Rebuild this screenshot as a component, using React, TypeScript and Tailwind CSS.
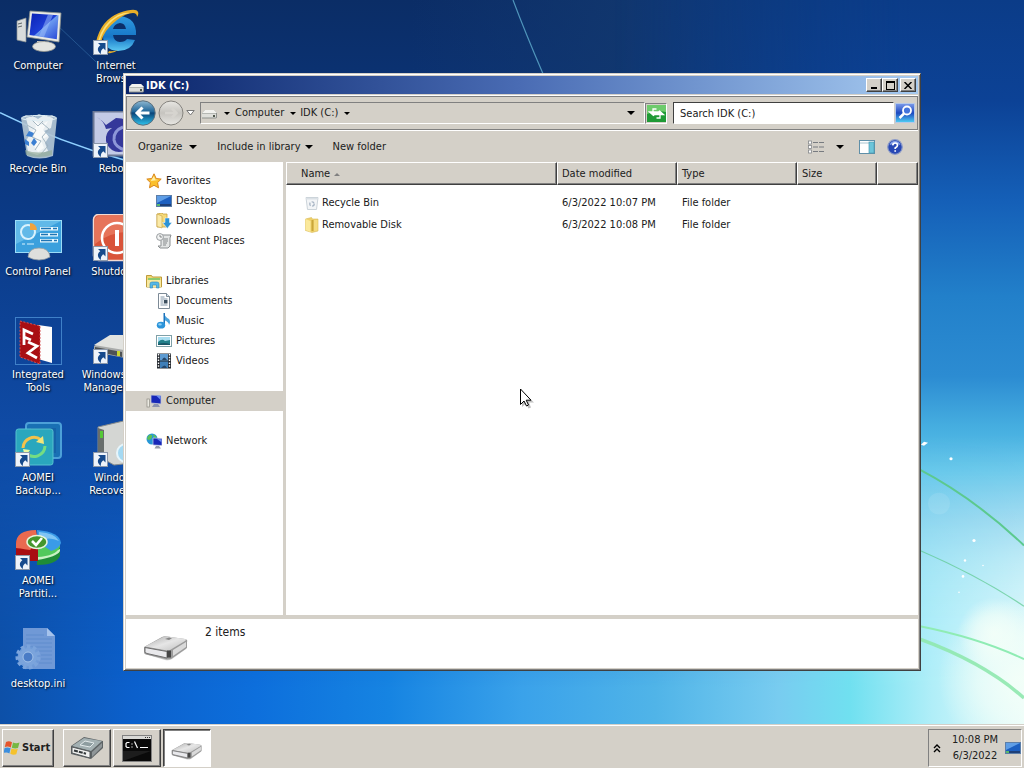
import type { ReactNode } from "react";

const raised =
  "border border-t-white border-l-white border-r-[#404040] border-b-[#404040] bg-[#d4d0c8] shadow-[inset_-1px_-1px_0_#808080]";
const sunken = "border border-t-[#808080] border-l-[#808080] border-r-white border-b-white";

function Wallpaper() {
  return (
    <svg
      className="absolute inset-0 h-full w-full"
      viewBox="0 0 1024 726"
      preserveAspectRatio="none"
      aria-hidden="true"
    >
      <defs>
        <linearGradient id="sky" x1="0" y1="0" x2="0" y2="1">
          <stop offset="0" stopColor="#0b2d66" />
          <stop offset="0.3" stopColor="#0b3a86" />
          <stop offset="0.6" stopColor="#0f4ba6" />
          <stop offset="1" stopColor="#0d56b6" />
        </linearGradient>
        <linearGradient id="topband" x1="0" y1="0" x2="1" y2="0">
          <stop offset="0.4" stopColor="#12366f" stopOpacity="0" />
          <stop offset="0.6" stopColor="#12386f" stopOpacity="0.8" />
          <stop offset="0.9" stopColor="#0b3c88" />
        </linearGradient>
        <linearGradient id="east" x1="0" y1="0" x2="0" y2="1">
          <stop offset="0" stopColor="#0b3c88" />
          <stop offset="0.14" stopColor="#0c4296" />
          <stop offset="0.28" stopColor="#1560b8" />
          <stop offset="0.41" stopColor="#2280ca" />
          <stop offset="0.52" stopColor="#2c8cd2" />
          <stop offset="0.59" stopColor="#46aee0" />
          <stop offset="0.65" stopColor="#5cc2e9" />
          <stop offset="0.72" stopColor="#80ccec" />
          <stop offset="0.78" stopColor="#98dcf2" />
          <stop offset="0.86" stopColor="#a8e8fa" />
          <stop offset="1" stopColor="#b6effb" />
        </linearGradient>
        <linearGradient id="south" x1="0" y1="0" x2="1" y2="0">
          <stop offset="0" stopColor="#0d50a8" />
          <stop offset="0.13" stopColor="#0b60cc" />
          <stop offset="0.25" stopColor="#0d6fdc" />
          <stop offset="0.38" stopColor="#1684e2" />
          <stop offset="0.51" stopColor="#3aa2ea" />
          <stop offset="0.64" stopColor="#50b4e8" />
          <stop offset="0.76" stopColor="#78ccf0" />
          <stop offset="0.83" stopColor="#70e0f0" />
          <stop offset="0.91" stopColor="#b0eef8" />
          <stop offset="1" stopColor="#e8fcfb" />
        </linearGradient>
        <linearGradient id="fadeRight" x1="0" y1="0" x2="1" y2="0">
          <stop offset="0.6" stopColor="#000" />
          <stop offset="0.89" stopColor="#fff" />
        </linearGradient>
        <linearGradient id="fadeDown" x1="0" y1="0" x2="0" y2="1">
          <stop offset="0.6" stopColor="#000" />
          <stop offset="0.95" stopColor="#fff" />
        </linearGradient>
        <mask id="rightMask">
          <rect width="1024" height="726" fill="url(#fadeRight)" />
        </mask>
        <mask id="downMask">
          <rect width="1024" height="726" fill="url(#fadeDown)" />
        </mask>
        <radialGradient id="shine">
          <stop offset="0" stopColor="#f4fff8" stopOpacity="0.9" />
          <stop offset="0.5" stopColor="#f4fff8" stopOpacity="0.6" />
          <stop offset="1" stopColor="#f4fff8" stopOpacity="0" />
        </radialGradient>
      </defs>
      <rect width="1024" height="726" fill="url(#sky)" />
      <rect width="1024" height="100" fill="url(#topband)" />
      <rect width="1024" height="726" fill="url(#east)" mask="url(#rightMask)" />
      <rect width="1024" height="726" fill="url(#south)" mask="url(#downMask)" />
      <circle cx="994" cy="635" r="36" fill="url(#shine)" />
      <circle cx="1018" cy="680" r="80" fill="url(#shine)" />
      <circle cx="939" cy="505" r="11" fill="#ffffff" fillOpacity="0.1" />
      <path d="M0 113Q60 143 126 161" stroke="#8fd0ff" strokeWidth="1.6" fill="none" />
      <path d="M58 26L96 62" stroke="#3c78b0" strokeOpacity="0.5" fill="none" />
      <path d="M513 0Q525 32 543 74" stroke="#4f95bb" strokeWidth="1.2" fill="none" />
      <g fill="none" stroke="#5cc98e">
        <path d="M918 470Q975 500 1024 547" strokeWidth="2" />
        <path d="M920 552Q980 578 1024 608" strokeOpacity="0.7" strokeWidth="1.3" />
        <path d="M920 628Q980 640 1024 661" stroke="#8fecb4" strokeWidth="2" />
        <path d="M920 641Q985 665 1024 700" stroke="#8fe8ae" strokeWidth="3.5" strokeOpacity="0.9" />
      </g>
      <g fill="#ffffff">
        <path d="M921 446l3-3 4 1-4 3z" />
        <circle cx="951" cy="460" r="1.6" />
        <circle cx="974" cy="542" r="1.6" />
        <circle cx="965" cy="562" r="1.2" />
        <circle cx="963" cy="578" r="1.3" />
        <circle cx="983" cy="567" r="0.8" />
        <circle cx="959" cy="594" r="0.8" />
      </g>
    </svg>
  );
}

function Shortcut() {
  return (
    <g>
      <rect x="1.5" y="32.5" width="14" height="14" fill="#eef3fa" stroke="#8c98aa" />
      <path d="M6 35h7.500v7.500l-2.200-2.200c-2 1.500-2.800 3-2.300 5.700-4-2.500-4-6.500-.7-8.700z" fill="#174a8c" />
    </g>
  );
}

function DesktopSvg({ children }: { children: ReactNode }) {
  return (
    <svg width="48" height="48" viewBox="0 0 48 48" aria-hidden="true">
      {children}
    </svg>
  );
}

const computerIcon = (
  <DesktopSvg>
    <defs>
      <linearGradient id="screen" x1="0" y1="0" x2="1" y2="1">
        <stop offset="0" stopColor="#0b22b4" />
        <stop offset="0.5" stopColor="#1d3ed6" />
        <stop offset="0.52" stopColor="#6c9bf0" />
        <stop offset="1" stopColor="#2747d6" />
      </linearGradient>
    </defs>
    <path d="M3 13l9-3v24l-9-2z" fill="#d9dcdc" stroke="#8c9494" strokeWidth="0.7" />
    <path d="M4 16l4-1M4 19l4-1" stroke="#5e6668" />
    <path d="M23 33h8v6h-8z" fill="#c9cbc8" />
    <ellipse cx="30" cy="38.500" rx="11.500" ry="5" fill="#e3e4e0" stroke="#94968f" strokeWidth="0.8" />
    <path d="M16 3l31 2-2 29-32-5z" fill="#e9eae6" stroke="#8c908c" strokeWidth="0.8" />
    <path d="M18 5.500l26.500 1.800-1.700 24L15.500 27z" fill="url(#screen)" />
    <path d="M34 6.600l5 .4-9 22-5-.8z" fill="#9fc0fa" fillOpacity="0.5" />
  </DesktopSvg>
);

const recycleIcon = (
  <DesktopSvg>
    <path d="M7 7l5-3 7 2 6-3 7 3 6-2 5 3-4 38q-14 5-26 0z" fill="#b4c7d5" fillOpacity="0.92" />
    <path d="M12 7l7-2 5 3 6-4 9 3-2 10-7 3 5 6-4 6 3 8-11 4-9-3-2-11 4-7z" fill="#e8eef1" />
    <path d="M20 9l7 5 7-4-5 9 5 6-7 4 3 8-6 4-4-6 2-8-5-5 5-6z" fill="#f8fafa" />
    <path d="M13 14l9 5-4 7 9 4-6 9M28 12l7 6-7 8 6 9-7 8M18 9l6 6 5-5" fill="none" stroke="#9db0bc" strokeWidth="0.9" />
    <ellipse cx="25" cy="7" rx="17.500" ry="2.600" fill="none" stroke="#e0eef5" />
    <path d="M12 25l3-5 5 2-2 4zM20 27l3 4-3 4-3-3zM11 28l4 3v4l-4-2z" fill="#3b7fd2" />
    <path d="M11 39q14 5 27 0v5q-13 4-26 0z" fill="#96ac9a" fillOpacity="0.7" />
  </DesktopSvg>
);

const controlIcon = (
  <DesktopSvg>
    <rect x="1.500" y="6.500" width="46" height="32" fill="#3ba0dd" stroke="#9bdcf7" />
    <path d="M2 7h45L2 30z" fill="#7cc9f0" fillOpacity="0.6" />
    <circle cx="14" cy="18" r="7" fill="none" stroke="#d9f2fd" strokeWidth="2" />
    <path d="M16 16V9a7 7 0 0 1 7 7z" fill="#f2a33c" />
    <g fill="#e7f8ff">
      <rect x="26" y="13" width="18" height="3.500" />
      <rect x="26" y="19" width="18" height="3.500" />
      <rect x="26" y="25" width="18" height="3.500" />
    </g>
    <path d="M27 14.500h10m2 0h4M27 20.500h7m2 0h7M27 26.500h11m2 0h3" stroke="#1e74b4" strokeWidth="1.500" />
    <path d="M8 30h3m2 0h7" stroke="#d9f2fd" />
    <path d="M14 43q1-9 11-9 10 0 11 9-5 3-11 3t-11-3z" fill="#dedfdc" stroke="#96a0a4" strokeWidth="0.8" />
  </DesktopSvg>
);

const toolsIcon = (
  <DesktopSvg>
    <rect x="1.500" y="0.500" width="46" height="47" fill="none" stroke="#3f80c8" />
    <path d="M24 8l14 2v36l-14-4z" fill="#fdfdfd" />
    <path d="M6 4l20 5v38L6 40z" fill="#a90f14" stroke="#d65050" strokeDasharray="2 1.500" />
    <path d="M10 28V13l9 4M10 20l7 3M14 25l9 4-9 7 9 5" fill="none" stroke="#fff" strokeWidth="2.800" />
  </DesktopSvg>
);

const backupIcon = (
  <DesktopSvg>
    <rect x="12" y="3" width="35" height="35" rx="3" fill="#1970b4" stroke="#4ca0d8" strokeWidth="2" />
    <rect x="17" y="8" width="25" height="25" fill="#1663a8" />
    <rect x="2" y="9" width="37" height="36" rx="2.500" fill="#2aa7bd" stroke="#56c2d0" />
    <path d="M9 28a11 11 0 0 1 18-8" fill="none" stroke="#f3c24a" strokeWidth="3" />
    <path d="M30 24l-1-8-7 6z" fill="#f3e57a" />
    <path d="M31 26a11 11 0 0 1-19 7" fill="none" stroke="#75dd82" strokeWidth="3" />
    <path d="M9 29l7 1-5 7z" fill="#e8f8a0" />
    <Shortcut />
  </DesktopSvg>
);

const partitionIcon = (
  <DesktopSvg>
    <path d="M23 22l23 2v9q-4 9-23 9z" fill="#1f8c38" />
    <path d="M23 34l23-8v2q-3 6-23 9z" fill="#c9f2c4" />
    <path d="M23 22l23-2v4q-4 9-23 10z" fill="#52c95c" />
    <path d="M2 18h22v20H2z" fill="#a80d12" />
    <path d="M2 21Q2 7 22 7l2 12-8 8q-12-2-14-2z" fill="#ea6a50" />
    <path d="M23 7q23 2 24 13-2 6-10 8L24 19z" fill="#3a9be8" />
    <path d="M25 9q16 1 20 9-10-5-20 0z" fill="#9cd6fa" fillOpacity="0.7" />
    <ellipse cx="23" cy="19" rx="10" ry="6.500" fill="#45962c" stroke="#e6f5dc" strokeWidth="1.500" />
    <path d="M18 18l4 4 6-7" stroke="#fff" strokeWidth="2.600" fill="none" />
    <Shortcut />
  </DesktopSvg>
);

const iniIcon = (
  <DesktopSvg>
    <path d="M9 2h24l8 8v33H9z" fill="#7099d6" />
    <path d="M33 2v8h8z" fill="#a6c3ec" />
    <path d="M12 9h18M12 13h26M12 17h26M12 21h26M25 25h13M27 29h11M27 33h11M25 37h13" stroke="#5f8ccd" />
    <circle cx="14" cy="31" r="10.500" fill="#6f9cd8" stroke="#7ba4dc" strokeWidth="4" strokeDasharray="3.500 2.500" />
    <circle cx="14" cy="31" r="9" fill="#7ba4dc" />
    <circle cx="14" cy="31" r="5" fill="#4a7cc6" stroke="#a5c4ea" />
  </DesktopSvg>
);

const ieIcon = (
  <DesktopSvg>
    <defs>
      <linearGradient id="ie" x1="0" y1="0" x2="0" y2="1">
        <stop offset="0" stopColor="#2f9ae0" />
        <stop offset="0.6" stopColor="#1777c8" />
        <stop offset="1" stopColor="#5cc8f2" />
      </linearGradient>
    </defs>
    <path d="M43 32q-4 11-17 11Q11 42 11 27 12 9 28 8q17 2 16 19H21q1 7 7 7 5 0 7-3zM21 21h13q-1-6-6-6-6 1-7 6z" fill="url(#ie)" fillRule="evenodd" />
    <path d="M4 34Q9 12 27 5q17-6 19-1 1 2-1 5 0-4-4-4-7 0-16 7Q12 22 9 34z" fill="#e8ae28" />
    <path d="M6 33Q11 15 26 7q8-3 12-2-13 2-21 11-7 8-9 17z" fill="#fbe07a" />
    <path d="M16 45q5 1 10-3-5 2-9 1z" fill="#e8ae28" />
    <Shortcut />
  </DesktopSvg>
);

const rebootIcon = (
  <DesktopSvg>
    <rect x="1.500" y="0.500" width="46" height="44" fill="#c3cae6" stroke="#6b7794" strokeWidth="2" />
    <path d="M5 6q6 4 9 8l10-7q12 0 18 8l-5 22q-9 7-17 2-7-5-6-13 1-6 6-9l-6 1Q12 10 5 6z" fill="#35389a" />
    <path d="M31 16q-10 4-9 13 1 7 11 10" fill="none" stroke="#8d96d8" strokeWidth="3" />
    <Shortcut />
  </DesktopSvg>
);

const shutdownIcon = (
  <DesktopSvg>
    <rect x="1.500" y="0.500" width="46" height="46" rx="5" fill="#d9543a" stroke="#f3dad2" strokeWidth="1.500" />
    <path d="M3 6q0-4 4-4h38v16Q20 16 3 30z" fill="#ef8a70" fillOpacity="0.6" />
    <circle cx="25" cy="24" r="15" fill="none" stroke="#fff" strokeWidth="2.500" />
    <path d="M25 16v16" stroke="#fff" strokeWidth="4" />
    <Shortcut />
  </DesktopSvg>
);

const diskManageIcon = (
  <DesktopSvg>
    <path d="M2 29L18 19h26l4 4v14l-10 5-36-7z" fill="#a9abaa" />
    <path d="M2 28L18 18h26l4 4-16 11z" fill="#e2e3e0" />
    <path d="M3 30l27 5v5L3 34z" fill="#4e5254" />
    <rect x="25" y="34" width="3" height="5" fill="#c8d62e" />
    <Shortcut />
  </DesktopSvg>
);

const recoveryIcon = (
  <DesktopSvg>
    <path d="M6 7l34-8v44l-18 2L6 36z" fill="#d4d6d3" stroke="#898d8c" />
    <path d="M6 8l6 2v32l-6-6z" fill="#686e6c" />
    <rect x="8" y="11" width="3" height="7" fill="#55c837" />
    <circle cx="34" cy="33" r="9" fill="#a5d9f2" stroke="#e6f5fb" strokeWidth="2" />
    <Shortcut />
  </DesktopSvg>
);

const desktopItems: { label: string; icon: ReactNode }[] = [
  { label: "Computer", icon: computerIcon },
  { label: "Recycle Bin", icon: recycleIcon },
  { label: "Control Panel", icon: controlIcon },
  { label: "Integrated\nTools", icon: toolsIcon },
  { label: "AOMEI\nBackup...", icon: backupIcon },
  { label: "AOMEI\nPartiti...", icon: partitionIcon },
  { label: "desktop.ini", icon: iniIcon },
  { label: "Internet\nBrowser", icon: ieIcon },
  { label: "Reboot", icon: rebootIcon },
  { label: "Shutdown", icon: shutdownIcon },
  { label: "Windows Disk\nManagement", icon: diskManageIcon },
  { label: "Windows\nRecovery...", icon: recoveryIcon },
];

function Icon16({ children }: { children: ReactNode }) {
  return (
    <svg width="16" height="16" viewBox="0 0 16 16" className="shrink-0" aria-hidden="true">
      {children}
    </svg>
  );
}

const driveSmall = (
  <Icon16>
    <path d="M1 8l3-3h9l3 3v4.500l-1 1H1z" fill="#8d908c" />
    <path d="M1 8l3-3h9l3 3z" fill="#f2f2ef" />
    <rect x="1" y="8.500" width="14" height="4" fill="#dedfdb" />
    <rect x="12" y="10" width="2" height="2" fill="#4f574c" />
  </Icon16>
);

const starIcon = (
  <Icon16>
    <path d="M8 .8l2.200 4.700 5 .6-3.600 3.500.9 5.200L8 12.300l-4.500 2.500.9-5.200L.8 6.100l5-.6z" fill="#fbc02d" stroke="#d9861c" strokeWidth="1" />
    <path d="M8 3l1.200 3.500 3 .4-7.500 1z" fill="#fff0a8" />
  </Icon16>
);

const monitorIcon = (
  <Icon16>
    <rect x="0.500" y="2.500" width="15" height="11" fill="#1c5fc0" stroke="#5c7ea8" />
    <path d="M1 3h14L1 10z" fill="#5f9ee6" />
    <rect x="1" y="11" width="14" height="2" fill="#1d3f78" />
    <rect x="1" y="11" width="3" height="2" fill="#59b86c" />
  </Icon16>
);

const downloadsIcon = (
  <Icon16>
    <path d="M1 1l5-1 1 1h4v13H1z" fill="#f5d978" stroke="#c7a243" strokeWidth="0.8" />
    <path d="M1 1l5 2v12l-5-1.500z" fill="#fbeaa8" stroke="#c7a243" strokeWidth="0.600" />
    <path d="M9 5h4.500v4.500H16l-4.700 6-4.800-6H9z" fill="#2d93d6" stroke="#fff" strokeWidth="0.500" />
  </Icon16>
);

const recentIcon = (
  <Icon16>
    <path d="M5 2h10l-1 3v8l-2 2H4l-2-2h3z" fill="#e3e5e5" stroke="#8b8f91" />
    <path d="M7 6h5M7 8h5M7 10h4M7 12h3" stroke="#85898b" />
    <circle cx="4" cy="4" r="3.400" fill="#f3f4f4" stroke="#999da0" />
    <path d="M4 2v2h2" stroke="#6a6e70" fill="none" strokeWidth="0.800" />
  </Icon16>
);

const librariesIcon = (
  <Icon16>
    <path d="M.5 2.500h5l1 1.500h9v10H.5z" fill="#f1d774" stroke="#bd9c3c" />
    <path d="M2 5h12v3H2z" fill="#8dcb6f" />
    <path d="M1 7h14v7H1z" fill="#f9e9a0" />
    <path d="M4 15v-4q0-2 2-2h5q2 0 2 2v4h-2.500v-3h-4v3z" fill="#58b8e6" stroke="#2a86bc" strokeWidth="0.600" />
  </Icon16>
);

const documentIcon = (
  <Icon16>
    <path d="M2.500.5h8l3 3v12h-11z" fill="#fff" stroke="#7d8a96" />
    <path d="M10.500.5v3h3" fill="#d6e3ee" stroke="#7d8a96" />
    <path d="M4.500 4h4M4.500 6h7M4.500 8h3M4.500 10h3M4.500 12h7" stroke="#8296a8" />
    <rect x="8" y="7" width="3.500" height="3.500" fill="#3c4f5e" />
  </Icon16>
);

const musicIcon = (
  <Icon16>
    <path d="M8 0q1 4 5 6 2 3 0 6 0-3-5-5z" fill="#4ba4de" />
    <path d="M7.500 0H9v12H7.500z" fill="#1e74bc" />
    <ellipse cx="5" cy="12.200" rx="4.200" ry="3.400" fill="#2b94da" />
    <ellipse cx="4" cy="11.400" rx="1.800" ry="1.100" fill="#8fd0f5" />
  </Icon16>
);

const picturesIcon = (
  <Icon16>
    <rect x="0.500" y="2.500" width="15" height="11" fill="#fff" stroke="#7fa0a8" />
    <rect x="2" y="4" width="12" height="8" fill="#a9ddf0" />
    <path d="M2 9q4-4 7-1l5-1v5H2z" fill="#23808a" />
    <path d="M2 11q6-2 12 0v1H2z" fill="#1a5768" />
  </Icon16>
);

const videosIcon = (
  <Icon16>
    <rect x="1" y="0.500" width="14" height="15" fill="#252a30" />
    <rect x="4" y="1" width="8" height="6.500" fill="#5d9bd2" />
    <rect x="4" y="8.500" width="8" height="6.500" fill="#3f7fb8" />
    <path d="M6 7q2-5 5 0zM5 15q4-5 6 0z" fill="#23466a" />
    <path d="M2.500 1v14M13.500 1v14" stroke="#fff" strokeWidth="1.400" strokeDasharray="1.500 1.300" />
  </Icon16>
);

const computerSmall = (
  <Icon16>
    <rect x="1" y="6" width="2.500" height="8" fill="#eceae2" stroke="#8e8c84" strokeWidth="0.700" />
    <path d="M5 2l10 .5v8.500L5 10z" fill="#1727b8" stroke="#c3c7d6" strokeWidth="0.800" />
    <path d="M10 2.500l4.500.3v4z" fill="#6c8df0" />
    <path d="M8 11h4l2 3H6z" fill="#8b92b0" />
  </Icon16>
);

const networkIcon = (
  <Icon16>
    <circle cx="6" cy="6" r="5.500" fill="#2797d6" />
    <path d="M3 2q4-1 3 2T3 7 1 5zM7 1l4 3-3 1z" fill="#5cc057" />
    <path d="M7 5l9 .5v7L7 12z" fill="#1727b8" stroke="#cdd2e6" strokeWidth="0.700" />
    <path d="M11 6l4.500.3v3z" fill="#6c8df0" />
    <path d="M10 13h3l2 2.500H8.500z" fill="#959aa8" />
  </Icon16>
);

const binSmall = (
  <Icon16>
    <path d="M2 2.500h12l-1.500 12h-9z" fill="#f3f5f7" stroke="#ccd4da" />
    <path d="M2.500 3h11v1.500h-11z" fill="#dbe1e6" />
    <circle cx="8" cy="9" r="2.200" fill="none" stroke="#a7b4c4" strokeWidth="1.300" strokeDasharray="3 1.500" />
  </Icon16>
);

const folderSmall = (
  <Icon16>
    <path d="M1.500 2l6-1.500 1 1.500h5.500v12l-6 1.500-6.500-2z" fill="#efd06a" stroke="#d8bc5c" strokeWidth="0.600" />
    <path d="M1.500 2l5 2v11l-5-2z" fill="#fbe99c" />
    <path d="M7.500 3h2v11h-2z" fill="#c9a63a" />
    <path d="M10 3h3.500v10.500l-3.500.5z" fill="#f5dc80" />
  </Icon16>
);

type NavItem = { label: string; icon: ReactNode; child?: boolean; selected?: boolean };
const navGroups: NavItem[][] = [
  [
    { label: "Favorites", icon: starIcon },
    { label: "Desktop", icon: monitorIcon, child: true },
    { label: "Downloads", icon: downloadsIcon, child: true },
    { label: "Recent Places", icon: recentIcon, child: true },
  ],
  [
    { label: "Libraries", icon: librariesIcon },
    { label: "Documents", icon: documentIcon, child: true },
    { label: "Music", icon: musicIcon, child: true },
    { label: "Pictures", icon: picturesIcon, child: true },
    { label: "Videos", icon: videosIcon, child: true },
  ],
  [{ label: "Computer", icon: computerSmall, selected: true }],
  [{ label: "Network", icon: networkIcon }],
];

const files = [
  { name: "Recycle Bin", date: "6/3/2022 10:07 PM", type: "File folder", icon: binSmall },
  { name: "Removable Disk", date: "6/3/2022 10:08 PM", type: "File folder", icon: folderSmall },
];

function Caret({ small = false }: { small?: boolean }) {
  return (
    <svg width={small ? 6 : 8} height={small ? 3 : 4} viewBox="0 0 8 4" className="shrink-0" aria-hidden="true">
      <path d="M0 0h8L4 4z" fill="#000" />
    </svg>
  );
}

function Drive({ width, height }: { width: number; height: number }) {
  return (
    <svg width={width} height={height} viewBox="0 0 46 26" aria-hidden="true">
      <defs>
        <linearGradient id="driveTop" x1="0" y1="0" x2="1" y2="1">
          <stop offset="0" stopColor="#a9a9a9" />
          <stop offset="0.5" stopColor="#e6e6e6" />
          <stop offset="1" stopColor="#bdbdbd" />
        </linearGradient>
      </defs>
      <path d="M2 19l20 6q4 1 7-1l14-10v-3L26 22 2 15z" fill="#9a9a9a" fillOpacity="0.5" />
      <path d="M1 12L19 2q2-1 5-.5L42 4q3 .5 2 3v6L28 24l-4 .5L3 19.500q-2-.5-2-2z" fill="#9b9b9b" />
      <path d="M2 11.500L20 2q2-1 5-.5L42 4q2 .5 0 2L27 15q-1 1-3 .500z" fill="url(#driveTop)" />
      <path d="M2 12.500l22 4v6.500L4 18.500q-2-.5-2-2z" fill="#e9e9ec" stroke="#6f6f6f" />
      <rect x="24" y="15.500" width="4" height="7" fill="#454545" />
      <path d="M30 15l13-8v5l-13 9z" fill="#dadada" />
      <path d="M22 4l4-1.500 3 .8-3 1.700z" fill="#858585" />
    </svg>
  );
}

function TitleBar() {
  return (
    <header className="flex h-[18px] items-center bg-linear-to-r from-[#0a246a] via-[#4a6cb4] to-[#a6caf0] px-0.5">
      <span className="mt-1">{driveSmall}</span>
      <h1 className="ml-0.5 flex-1 pt-0.5 text-[11px] leading-4 font-bold text-white">IDK (C:)</h1>
      <div className="flex">
        <button aria-label="Minimize" className={`flex h-3.5 w-4 items-end pb-0.5 pl-1 ${raised}`}>
          <span className="h-0.5 w-1.5 bg-black" />
        </button>
        <button aria-label="Maximize" className={`flex h-3.5 w-4 items-center justify-center ${raised}`}>
          <span className="h-[9px] w-[9px] border border-t-2 border-black" />
        </button>
        <button aria-label="Close" className={`ml-0.5 flex h-3.5 w-4 items-center justify-center ${raised}`}>
          <svg width="8" height="7" viewBox="0 0 8 7" aria-hidden="true">
            <path d="M.5 0l7 7M7.500 0l-7 7" stroke="#000" strokeWidth="1.500" />
          </svg>
        </button>
      </div>
    </header>
  );
}

function AddressBand() {
  return (
    <div className="mt-0.5 flex h-[34px] items-center border border-[#808080] pr-0.5 pl-[3px] shadow-[0_-1px_0_#fff,0_1px_0_#fff]">
      <button aria-label="Back">
        <svg width="26" height="26" viewBox="0 0 26 26" aria-hidden="true">
          <defs>
            <linearGradient id="back" x1="0" y1="0" x2="0" y2="1">
              <stop offset="0" stopColor="#8fb8d2" />
              <stop offset="0.45" stopColor="#1e6598" />
              <stop offset="0.5" stopColor="#0a4478" />
              <stop offset="1" stopColor="#2fc4ee" />
            </linearGradient>
          </defs>
          <circle cx="13" cy="13" r="12.200" fill="url(#back)" stroke="#5d6f7c" />
          <path d="M19.500 13H8M12.500 7.500L7 13l5.500 5.500" fill="none" stroke="#fff" strokeWidth="3" />
        </svg>
      </button>
      <button aria-label="Forward" className="ml-0.5">
        <svg width="26" height="26" viewBox="0 0 26 26" aria-hidden="true">
          <defs>
            <linearGradient id="forward" x1="0" y1="0" x2="0" y2="1">
              <stop offset="0" stopColor="#e8e7e3" />
              <stop offset="0.500" stopColor="#c6c4bf" />
              <stop offset="1" stopColor="#e8e7e3" />
            </linearGradient>
          </defs>
          <circle cx="13" cy="13" r="12" fill="url(#forward)" stroke="#85837e" />
          <path d="M7 13h11M14 8.500l4.500 4.500-4.500 4.500" fill="none" stroke="#d6d4cf" strokeWidth="2.500" />
        </svg>
      </button>
      <button aria-label="Recent pages" className="ml-0.5 flex">
        <svg width="9" height="6" viewBox="0 0 9 6" aria-hidden="true">
          <path d="M.8.5h7.400L4.500 5z" fill="#fff" stroke="#777" />
        </svg>
      </button>
      <nav aria-label="Address" className={`ml-[5px] flex h-[22px] flex-1 items-center pr-[9px] ${sunken}`}>
        {driveSmall}
        <button aria-label="Locations" className="ml-[7px] flex">
          <Caret small />
        </button>
        <a href="#computer" className="ml-[5px]">Computer</a>
        <button aria-label="Computer folders" className="ml-1.5 flex">
          <Caret small />
        </button>
        <a href="#drive" className="ml-1">IDK (C:)</a>
        <button aria-label="Drive folders" className="ml-1.5 flex">
          <Caret small />
        </button>
        <button aria-label="Previous locations" className="ml-auto flex">
          <Caret />
        </button>
      </nav>
      <button aria-label="Refresh" className={`flex h-[21px] w-[22px] items-center justify-center ${sunken}`}>
        <svg width="19" height="17" viewBox="0 0 19 17" className="shrink-0" aria-hidden="true">
          <rect width="19" height="17" fill="#1f9a35" />
          <path d="M0 0h19v7Q9 5 0 9z" fill="#6ecb6c" />
          <path d="M9.500 4H6v4M6.500 10.500L2.500 7h8zM9.500 13H13V9M12.500 6l4 3.500h-8z" fill="none" stroke="#fff" strokeWidth="1.300" />
          <path d="M6.500 10.500L2.500 7h8zM12.500 6l4 3.500h-8z" fill="#fff" />
        </svg>
      </button>
      <input
        type="search"
        aria-label="Search IDK (C:)"
        placeholder="Search IDK (C:)"
        className="ml-1.5 h-[22px] w-[221px] border border-t-[#404040] border-r-white border-b-white border-l-[#404040] bg-white px-1.5 outline-none placeholder:text-[#202020]"
      />
      <button aria-label="Search" className="ml-px flex">
        <svg width="20" height="20" viewBox="0 0 20 20" aria-hidden="true">
          <defs>
            <linearGradient id="find" x1="0" y1="0" x2="0" y2="1">
              <stop offset="0" stopColor="#7c9bea" />
              <stop offset="0.5" stopColor="#1d48c0" />
              <stop offset="1" stopColor="#4fd0f4" />
            </linearGradient>
          </defs>
          <rect x="0.500" y="0.500" width="19" height="19" fill="url(#find)" stroke="#b5c8e8" />
          <circle cx="12" cy="7.500" r="4" fill="#4474dc" stroke="#fff" strokeWidth="1.800" />
          <path d="M9 10.500l-4.500 4.500" stroke="#fff" strokeWidth="2.500" />
        </svg>
      </button>
    </div>
  );
}

function CommandBar() {
  return (
    <div role="toolbar" aria-label="Commands" className="flex h-8 items-center pt-px pr-[15px] pl-3">
      <button className="flex items-center gap-[7px]">
        Organize <Caret />
      </button>
      <button className="ml-5 flex items-center gap-1">
        Include in library <Caret />
      </button>
      <button className="ml-5">New folder</button>
      <button aria-label="Change view" className="ml-auto">
        <Icon16>
          <g fill="#fff" stroke="#85888c" strokeWidth="0.800">
            <rect x="0.500" y="2" width="3" height="3" />
            <rect x="0.500" y="6.500" width="3" height="3" />
            <rect x="0.500" y="11" width="3" height="3" />
          </g>
          <path d="M5 3.500h5m1 0h5M5 8h5m1 0h5M5 12.500h5m1 0h5" stroke="#777b80" />
        </Icon16>
      </button>
      <button aria-label="More view options" className="ml-3 flex">
        <Caret />
      </button>
      <button aria-label="Preview pane" className="ml-[15px]">
        <Icon16>
          <rect x="0.500" y="1.500" width="15" height="13" fill="#fff" stroke="#5f8fa8" />
          <path d="M1 4h14" stroke="#a8c4d0" />
          <rect x="10" y="3" width="5" height="11" fill="#6cc5da" stroke="#4c9ab2" strokeWidth="0.700" />
        </Icon16>
      </button>
      <button aria-label="Help" className="ml-3">
        <Icon16>
          <circle cx="8" cy="8" r="7.300" fill="#2747b4" stroke="#8c9bc8" strokeWidth="1.200" />
          <path d="M2.500 6Q4 2 8 2t5.500 4q-5-2-11 0z" fill="#8aa4ea" />
          <path d="M5.700 6.300Q6 4 8.200 4t2.300 2.200Q10.500 7.500 8.200 9v1M8.200 11.200v1.600" fill="none" stroke="#fff" strokeWidth="1.700" />
        </Icon16>
      </button>
    </div>
  );
}

function NavPane() {
  return (
    <nav aria-label="Folders" className="flex w-40 shrink-0 flex-col gap-5 border-r-[3px] border-[#d4d0c8] bg-white pt-[9px]">
      {navGroups.map((group) => (
        <ul key={group[0].label}>
          {group.map((item) => (
            <li key={item.label} className={item.selected ? "bg-[#d4d0c8]" : ""}>
              <a
                href={`#${item.label.toLowerCase().replace(" ", "-")}`}
                className={`flex h-5 items-center gap-1 ${item.child ? "pl-[30px]" : "pl-5"}`}
              >
                {item.icon}
                {item.label}
              </a>
            </li>
          ))}
        </ul>
      ))}
    </nav>
  );
}

function FileList() {
  const head = `h-[23px] pt-px pl-1 text-left font-normal ${raised}`;
  return (
    <div className="min-w-0 flex-1 bg-white">
      <table className="w-full table-fixed border-separate border-spacing-0">
        <colgroup>
          <col className="w-[271px]" />
          <col className="w-[120px]" />
          <col className="w-[120px]" />
          <col className="w-20" />
          <col />
        </colgroup>
        <thead>
          <tr>
            <th className={`h-[23px] pt-px pl-3.5 text-left font-normal ${raised}`}>
              <span className="flex items-center gap-1">
                Name
                <svg width="6" height="3" viewBox="0 0 6 3" aria-hidden="true">
                  <path d="M0 3h6L3 0z" fill="#808080" />
                </svg>
              </span>
            </th>
            <th className={head}>Date modified</th>
            <th className={head}>Type</th>
            <th className={head}>Size</th>
            <td className={head} />
          </tr>
        </thead>
        <tbody>
          <tr aria-hidden="true">
            <td className="h-[7px]" colSpan={5} />
          </tr>
          {files.map((file) => (
            <tr key={file.name} className="h-[22px]">
              <td className="pl-[18px]">
                <span className="flex items-center gap-0.5">
                  {file.icon}
                  {file.name}
                </span>
              </td>
              <td className="pl-[5px]">{file.date}</td>
              <td className="pl-[5px]">{file.type}</td>
              <td />
              <td />
            </tr>
          ))}
        </tbody>
      </table>
    </div>
  );
}

function ExplorerWindow() {
  return (
    <main className="absolute top-[73px] right-[103px] bottom-[53px] left-[123px] flex flex-col border border-t-[#d4d0c8] border-r-[#404040] border-b-[#404040] border-l-[#d4d0c8] bg-[#d4d0c8] p-0.5 shadow-[inset_1px_1px_0_#fff,inset_-1px_-1px_0_#808080]">
      <TitleBar />
      <AddressBand />
      <CommandBar />
      <div className="flex min-h-0 flex-1">
        <NavPane />
        <FileList />
      </div>
      <footer className="flex h-[53px] shrink-0 border-t-4 border-[#d4d0c8] bg-white pl-[17px]">
        <span className="mt-4">
          <Drive width={46} height={26} />
        </span>
        <p className="mt-[5px] ml-4 text-xs leading-4">2 items</p>
      </footer>
    </main>
  );
}

function Taskbar() {
  const task = `flex h-[38px] w-12 items-center justify-center ${raised}`;
  return (
    <footer className="relative flex h-11 shrink-0 items-center gap-0.5 bg-[#d4d0c8] px-0.5 pt-1 shadow-[inset_0_1px_0_#d4d0c8,inset_0_2px_0_#fff]">
      <button className={`flex h-[38px] w-[52px] items-center gap-0.5 pl-px text-[11px] font-bold ${raised}`}>
        <svg width="16" height="16" viewBox="0 0 16 16" className="shrink-0" aria-hidden="true">
          <path d="M2 2q3-1.500 6 .3L6.800 7.500Q4 6 .8 7z" fill="#e5552c" />
          <path d="M9 2.500q3 1.500 6.500 0L14 8q-3 1-6.200-.3z" fill="#76b843" />
          <path d="M.6 8q3-1.300 6 .3L5.400 13.500Q3 12-.5 13z" fill="#3b8ede" />
          <path d="M7.500 8.600q3 1.300 6.300.2l-1.500 5.500q-3 1-6-.5z" fill="#f5c22c" />
        </svg>
        Start
      </button>
      <button aria-label="Disk tool" className={`ml-[7px] ${task}`}>
        <svg width="34" height="24" viewBox="0 0 34 24" aria-hidden="true">
          <path d="M1 10L14 1l19 4v7L21 23 1 18z" fill="#5d6365" />
          <path d="M2 10l12-8 18 3-11 10z" fill="#a3b0b2" />
          <path d="M10 9l5-4 9 2-4 4z" fill="#8e9da0" stroke="#e2e9ea" />
          <path d="M2 11l18 4.500V22L2 17z" fill="#f0f1f0" stroke="#54595b" />
          <path d="M4 14.500l12 3.200" stroke="#33383a" strokeWidth="2" strokeDasharray="4 1" />
          <path d="M22 16L32 7v4l-10 10z" fill="#8f9698" />
        </svg>
      </button>
      <button aria-label="Command prompt" className={task}>
        <svg width="30" height="27" viewBox="0 0 30 27" aria-hidden="true">
          <rect x="0.500" y="0.500" width="29" height="26" fill="#0a0a0a" stroke="#808080" />
          <rect x="1" y="1" width="28" height="3" fill="#d9d9d6" />
          <path d="M23 2.500h1m1 0h1m1 0h1" stroke="#333" />
          <path d="M1 16h28L1 26z" fill="#2a2a2a" fillOpacity="0.6" />
          <path d="M7.500 7.500H5l-1 1v3l1 1h2.500M10 8.500v1M10 11.500v1M12.500 6.500l3 6.500M18 12.500h8" fill="none" stroke="#fff" strokeWidth="1.200" />
        </svg>
      </button>
      <button
        aria-label="IDK (C:)"
        className="flex h-[38px] w-12 items-center justify-center border border-t-[#404040] border-r-white border-b-white border-l-[#404040] bg-white pt-1.5 shadow-[inset_1px_1px_0_#808080]"
      >
        <Drive width={32} height={20} />
      </button>
      <div className={`ml-auto flex h-[38px] w-[94px] items-center pl-1 ${sunken}`}>
        <button aria-label="Show hidden icons">
          <svg width="8" height="9" viewBox="0 0 8 9" aria-hidden="true">
            <path d="M1 4l3-3 3 3M1 8l3-3 3 3" fill="none" stroke="#000" strokeWidth="1.400" />
          </svg>
        </button>
        <p className="flex-1 pl-1 text-center leading-4">
          10:08 PM
          <br />
          6/3/2022
        </p>
        <button aria-label="Show desktop">
          {monitorIcon}
        </button>
      </div>
    </footer>
  );
}

export default function App() {
  return (
    <div className="flex h-screen flex-col overflow-hidden bg-[#0b56b8] font-['DejaVu_Sans_Condensed','Noto_Sans',sans-serif] text-[11px] leading-4 text-[#202020]">
      <div className="relative min-h-0 flex-1 overflow-hidden">
        <Wallpaper />
        <ul className="relative grid w-max grid-flow-col grid-cols-[76px_76px] grid-rows-[repeat(7,103px)] gap-x-0.5">
          {desktopItems.map((item) => (
            <li key={item.label}>
              <button className="flex w-full flex-col items-center gap-[3px] pt-2">
                {item.icon}
                <span className="text-center leading-[13px] whitespace-pre text-white [text-shadow:1px_1px_2px_#000]">
                  {item.label}
                </span>
              </button>
            </li>
          ))}
        </ul>
        <ExplorerWindow />
        <svg
          width="16"
          height="22"
          viewBox="0 0 16 22"
          className="pointer-events-none absolute top-[388px] left-[519px]"
          aria-hidden="true"
        >
          <path d="M3 3v16l4-3.500 2.500 5 2.500-1-2-5h5z" fill="#000" fillOpacity="0.25" />
          <path d="M1.500 1v15.500l3.500-3.500 2.500 5 2-1-2.300-4.800H12z" fill="#fff" stroke="#000" />
        </svg>
      </div>
      <Taskbar />
    </div>
  );
}
